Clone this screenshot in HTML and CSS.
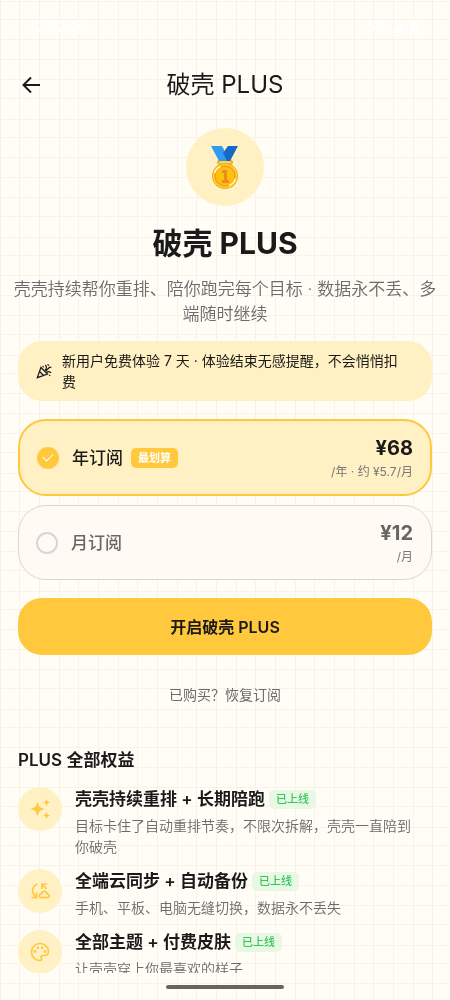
FILE: index.html
```html
<!DOCTYPE html>
<html lang="zh-CN">
<head>
<meta charset="utf-8">
<meta name="viewport" content="width=device-width, initial-scale=1">
<title>破壳 PLUS</title>
<link rel="stylesheet" href="styles.css">
</head>
<body>
<svg class="grid-paper" aria-hidden="true">
  <defs>
    <pattern id="grid" width="118" height="118" patternUnits="userSpaceOnUse">
      <path fill="#f8f3e9" d="M0 0h1v118h-1zM19 0h1v118h-1zM39 0h1v118h-1zM59 0h1v118h-1zM78 0h1v118h-1zM98 0h1v118h-1zM0 1h118v1h-118zM0 19h118v1h-118zM0 39h118v1h-118zM0 59h118v1h-118zM0 79h118v1h-118zM0 98h118v1h-118z"/>
    </pattern>
  </defs>
  <rect width="100%" height="100%" fill="url(#grid)"/>
</svg>
<div class="screen">
  <div class="status-bar">
    <div class="status-group">
      <span>2:02</span>
      <svg width="14" height="14" viewBox="0 0 14 14" fill="none" stroke="currentColor" stroke-width="2"><circle cx="7" cy="7" r="6"/><circle cx="7" cy="7" r="2"/></svg>
    </div>
    <div class="status-group">
      <span>5G</span>
      <svg width="12" height="12" viewBox="0 0 12 12" fill="currentColor"><path d="M11 1v11H0z"/></svg>
      <svg width="12" height="14" viewBox="0 0 12 14" fill="currentColor"><path d="M4 0h4v2h2v12H2V2h2z"/></svg>
    </div>
  </div>
  <header class="app-bar">
    <button class="back" type="button" aria-label="返回">
      <svg width="24" height="24" viewBox="0 0 24 24" fill="none" stroke="currentColor" stroke-width="2"><path d="M22 12H5.500M13 4.500 5.500 12l7.500 7.500"/></svg>
    </button>
    <h1 class="app-title">破壳 PLUS</h1>
  </header>
  <main class="content">
    <section class="hero">
      <div class="medal">
        <svg width="44" height="44" viewBox="0 0 44 44" role="img" aria-label="金牌">
          <path fill="none" stroke="#f5b51c" stroke-width="2.500" d="M17 15.500h10c2.500 0 2.500 3.500-.5 3.500h-9c-3 0-3-3.500-.5-3.500z"/>
          <rect x="20" y="16" width="4" height="5" fill="#ffd34d"/>
          <path fill="#2f9bf3" d="M8 1h11l8 15H16z"/>
          <path fill="#1769c9" d="M25 1h10l-8 15h-3l-4-8z"/>
          <circle cx="22" cy="31" r="13" fill="#f2ad1a"/>
          <circle cx="22" cy="31" r="12" fill="#ffd13b"/>
          <circle cx="22" cy="31" r="10" fill="#fdc20e" stroke="#f79f20" stroke-width="1.500"/>
          <path d="M11.500 28a11 11 0 0 1 6-6.500M26 40.500a11 11 0 0 0 6.500-7" fill="none" stroke="#fff8c4" stroke-width="1.500"/>
          <path d="M20 25h4v10h2v3h-7v-3h2v-7h-2v-2z" fill="#f18a1c"/>
        </svg>
      </div>
      <h2 class="hero-title">破壳 PLUS</h2>
      <p class="hero-text">壳壳持续帮你重排、陪你跑完每个目标 · 数据永不丢、多端随时继续</p>
    </section>
    <div class="trial">
      <svg width="16" height="16" viewBox="0 0 18 18" fill="none" stroke="currentColor" stroke-width="1.400"><path d="m5.500 5-4 11.500 11.500-4zM4 9.500l4.500 4.500M10 8c2-1.500 2.500-3.500.500-6M11 9l4-4c.8-.8 1.500-.5 2.300 0M12 10.500c1.500-1.500 3-1 5 .5M7.500 3.500l1 1.500M13 1.500l1.500 1.500M15 13.500l1 1"/></svg>
      <p class="trial-text">新用户免费体验 7 天 · 体验结束无感提醒，不会悄悄扣费</p>
    </div>
    <form class="plans">
      <label class="plan">
        <input class="plan-radio" type="radio" name="plan" value="year" checked>
        <span class="plan-name">年订阅</span>
        <span class="best">最划算</span>
        <span class="plan-cost"><strong class="price">¥68</strong><span class="per">/年 · 约 ¥5.7/月</span></span>
      </label>
      <label class="plan">
        <input class="plan-radio" type="radio" name="plan" value="month">
        <span class="plan-name">月订阅</span>
        <span class="plan-cost"><strong class="price">¥12</strong><span class="per">/月</span></span>
      </label>
      <button class="subscribe" type="submit">开启破壳 PLUS</button>
      <button class="restore" type="button">已购买？恢复订阅</button>
    </form>
    <section class="benefits">
      <h2 class="benefits-title">PLUS 全部权益</h2>
      <ul class="benefit-list">
        <li class="benefit">
          <span class="benefit-icon">
            <svg width="20" height="20" viewBox="0 0 20 20" fill="currentColor"><path d="M7.500 3 9.600 7.900 14.500 10 9.600 12.100 7.500 17 5.400 12.100.5 10l4.900-2.100zM16.500 0l1 2.500 2.500 1-2.500 1-1 2.500-1-2.500-2.500-1 2.500-1zM16.500 13l1 2.500 2.500 1-2.500 1-1 2.500-1-2.500-2.500-1 2.500-1z"/></svg>
          </span>
          <div class="benefit-body">
            <h3 class="benefit-name">壳壳持续重排 + 长期陪跑<span class="live">已上线</span></h3>
            <p class="benefit-text">目标卡住了自动重排节奏，不限次拆解，壳壳一直陪到你破壳</p>
          </div>
        </li>
        <li class="benefit">
          <span class="benefit-icon">
            <svg width="20" height="18" viewBox="0 0 20 18" fill="none" stroke="currentColor" stroke-width="1.700"><path d="M7.500 2C1.500 4.500 1 10.500 6 15M1.500 15.700h5V10.500M17 2h-5v5M12.500 2.500l4 4.500M11.700 15.700h5.300c2.800 0 2.800-3.700.2-3.700-.8-3.500-5-3.500-5.500-.4-3.300.2-3.300 4.100 0 4.100z"/></svg>
          </span>
          <div class="benefit-body">
            <h3 class="benefit-name">全端云同步 + 自动备份<span class="live">已上线</span></h3>
            <p class="benefit-text">手机、平板、电脑无缝切换，数据永不丢失</p>
          </div>
        </li>
        <li class="benefit">
          <span class="benefit-icon">
            <svg width="20" height="20" viewBox="0 0 20 20" fill="none" stroke="currentColor" stroke-width="1.700"><path d="M10 1.500c-4.700 0-8.500 3.800-8.500 8.500s3.800 8.500 8.500 8.500c1.400 0 2-1.200 1.300-2.300-.8-1.300 0-2.700 1.500-2.700h2c2 0 3.700-1.700 3.700-4 0-4.600-3.800-8-8.500-8z"/><g fill="currentColor" stroke="none"><circle cx="5" cy="9.500" r="1.400"/><circle cx="7.800" cy="5.800" r="1.400"/><circle cx="12.200" cy="5.800" r="1.400"/><circle cx="15" cy="9.500" r="1.400"/></g></svg>
          </span>
          <div class="benefit-body">
            <h3 class="benefit-name">全部主题 + 付费皮肤<span class="live">已上线</span></h3>
            <p class="benefit-text">让壳壳穿上你最喜欢的样子</p>
          </div>
        </li>
      </ul>
    </section>
  </main>
  <div class="gesture-bar"><span class="gesture-pill"></span></div>
</div>
</body>
</html>
```
FILE: styles.css
```css
* { box-sizing: border-box; }

body {
  margin: 0;
  background: #fffdf6;
  color: #1a1a1a;
  font-family: Inter, "Noto Sans CJK SC", sans-serif;
}

h1, h2, h3, p, ul { margin: 0; padding: 0; }
button { border: 0; background: none; padding: 0; color: inherit; font-family: inherit; cursor: pointer; }
svg { display: block; flex: none; }

.grid-paper { position: fixed; inset: 0; width: 100%; height: 100%; z-index: -1; }

.screen { display: flex; flex-direction: column; height: 100vh; }

.status-bar {
  display: flex;
  justify-content: space-between;
  flex: none;
  height: 57px;
  padding: 17px 30px 0 35px;
  color: #ffffff;
  font-size: 14px;
  line-height: 20px;
}
.status-group { display: flex; align-items: center; gap: 5px; height: 20px; }

.app-bar {
  display: grid;
  grid-template-columns: 24px 1fr 24px;
  align-items: center;
  flex: none;
  height: 56px;
  padding: 0 18px;
}
.back { display: block; width: 24px; height: 24px; }
.app-title { font-size: 24px; line-height: 32px; font-weight: 400; text-align: center; }

.content { flex: 1; min-height: 0; padding: 15px 18px 0; overflow: hidden auto; scrollbar-width: none; }

.hero { display: flex; flex-direction: column; align-items: center; margin: 0 -6px; }
.medal {
  display: grid;
  place-items: center;
  width: 78px;
  height: 78px;
  border-radius: 50%;
  background: #fff1c4;
}
.hero-title { margin-top: 16px; font-size: 30px; line-height: 42px; font-weight: 700; }
.hero-text { margin-top: 13px; color: #6b6b6b; font-size: 17px; line-height: 25px; font-weight: 350; text-align: center; }

.trial {
  display: flex;
  align-items: center;
  gap: 10px;
  margin-top: 14px;
  padding: 9px 24px 9px 18px;
  border-radius: 24px;
  background: #fff1c4;
}
.trial-text { font-size: 14px; line-height: 21px; }

.plans { display: flex; flex-direction: column; margin-top: 18px; }
.plan {
  display: flex;
  align-items: center;
  min-height: 75px;
  margin-bottom: 9px;
  padding: 0 18px 0 17px;
  border: 1px solid #d6d6d6;
  border-radius: 28px;
  background: #fffaf3;
  color: #666666;
  cursor: pointer;
}
.plan:has(:checked) {
  min-height: 77px;
  padding: 0 17px;
  border: 2px solid #ffc83d;
  background: #fff1c4;
  color: #1a1a1a;
}
.plan + .plan { margin-bottom: 18px; }
.plan-radio {
  display: grid;
  place-items: center;
  flex: none;
  appearance: none;
  width: 22px;
  height: 22px;
  margin: 0;
  border: 2px solid #d6d6d6;
  border-radius: 50%;
}
.plan-radio:checked { border-color: #ffc83d; background: #ffc83d; }
.plan-radio:checked::before {
  content: "";
  width: 9px;
  height: 5px;
  margin-bottom: 3px;
  border: solid #ffffff;
  border-width: 0 0 1px 1px;
  transform: rotate(-45deg);
}
.plan-name { margin-left: 13px; font-size: 17px; line-height: 24px; font-weight: 500; }
.best {
  margin-left: 8px;
  padding: 0 7px;
  border-radius: 5px;
  background: #ffc83d;
  color: #ffffff;
  font-size: 11px;
  line-height: 20px;
  font-weight: 700;
}
.plan-cost { display: flex; flex-direction: column; align-items: flex-end; margin-left: auto; }
.price { font-size: 20px; line-height: 28px; font-weight: 700; }
.per { color: #777777; font-size: 12px; line-height: 20px; }

.subscribe {
  height: 57px;
  padding-bottom: 2px;
  border-radius: 24px;
  background: #ffc83d;
  font-size: 16px;
  font-weight: 600;
}
.restore {
  align-self: center;
  margin-top: 27px;
  color: #6b6b6b;
  font-size: 14px;
  line-height: 26px;
}

.benefits { margin-top: 40px; }
.benefits-title { font-size: 17px; line-height: 24px; font-weight: 600; }
.benefit-list { display: grid; gap: 12px; margin-top: 15px; list-style: none; }
.benefit { display: flex; gap: 13px; }
.benefit-icon {
  display: grid;
  place-items: center;
  flex: none;
  width: 44px;
  height: 44px;
  border-radius: 50%;
  background: #fff1c4;
  color: #ffc83d;
}
.benefit-body { flex: 1; padding-right: 12px; }
.benefit-name { display: flex; align-items: center; gap: 4px; font-size: 17px; line-height: 24px; font-weight: 600; }
.live {
  padding: 0 7px;
  border-radius: 5px;
  background: #e9f7e5;
  color: #34c759;
  font-size: 11px;
  line-height: 19px;
  font-weight: 500;
}
.benefit-text { margin-top: 4px; color: #6b6b6b; font-size: 14px; line-height: 21px; font-weight: 350; }

.gesture-bar { display: flex; justify-content: center; flex: none; height: 27px; padding-top: 12px; }
.gesture-pill { width: 118px; height: 4px; border-radius: 2px; background: #66655f; }
```
